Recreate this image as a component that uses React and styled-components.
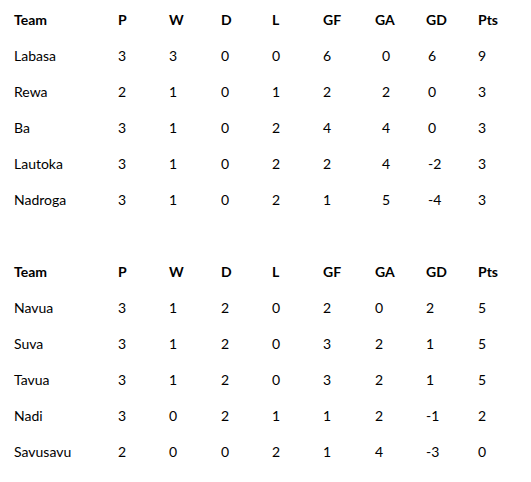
import React from 'react';
import styled, { createGlobalStyle } from 'styled-components';

const GlobalStyle = createGlobalStyle`
  html, body {
    margin: 0;
    padding: 0;
    background: #ffffff;
  }
  body {
    font-family: Lato, "Open Sans", "Liberation Sans", sans-serif;
    color: #000000;
  }
`;

const Page = styled.div`
  width: 531px;
  height: 482px;
  padding: 2px 0 0 14px;
  box-sizing: border-box;
  display: flex;
  flex-direction: column;
  gap: 36px;
`;

const Table = styled.div`
  display: flex;
  flex-direction: column;
`;

const Row = styled.div`
  display: grid;
  grid-template-columns: 104px 51px 52px 51px 51px 52px 51px 52px 40px;
  height: 36px;
  line-height: 36px;
  font-size: 14px;
  font-weight: ${(p) => (p.$head ? 700 : 400)};
`;

const Cell = styled.div`
  padding-left: ${(p) => p.$shift || 0}px;
  white-space: nowrap;
`;

const columns = ['Team', 'P', 'W', 'D', 'L', 'GF', 'GA', 'GD', 'Pts'];

const groups = [
  {
    shift: [0, 0, 0, 0, 0, 0, 7, 2, 0],
    rows: [
      ['Labasa', 3, 3, 0, 0, 6, 0, 6, 9],
      ['Rewa', 2, 1, 0, 1, 2, 2, 0, 3],
      ['Ba', 3, 1, 0, 2, 4, 4, 0, 3],
      ['Lautoka', 3, 1, 0, 2, 2, 4, -2, 3],
      ['Nadroga', 3, 1, 0, 2, 1, 5, -4, 3],
    ],
  },
  {
    shift: [0, 0, 0, 0, 0, 0, 0, 0, 0],
    rows: [
      ['Navua', 3, 1, 2, 0, 2, 0, 2, 5],
      ['Suva', 3, 1, 2, 0, 3, 2, 1, 5],
      ['Tavua', 3, 1, 2, 0, 3, 2, 1, 5],
      ['Nadi', 3, 0, 2, 1, 1, 2, -1, 2],
      ['Savusavu', 2, 0, 0, 2, 1, 4, -3, 0],
    ],
  },
];

export default function App() {
  return (
    <>
      <GlobalStyle />
      <Page>
        {groups.map((g, gi) => (
          <Table key={gi}>
            <Row $head>
              {columns.map((c) => (
                <Cell key={c}>{c}</Cell>
              ))}
            </Row>
            {g.rows.map((r) => (
              <Row key={r[0]}>
                {r.map((v, i) => (
                  <Cell key={i} $shift={g.shift[i]}>
                    {v}
                  </Cell>
                ))}
              </Row>
            ))}
          </Table>
        ))}
      </Page>
    </>
  );
}
